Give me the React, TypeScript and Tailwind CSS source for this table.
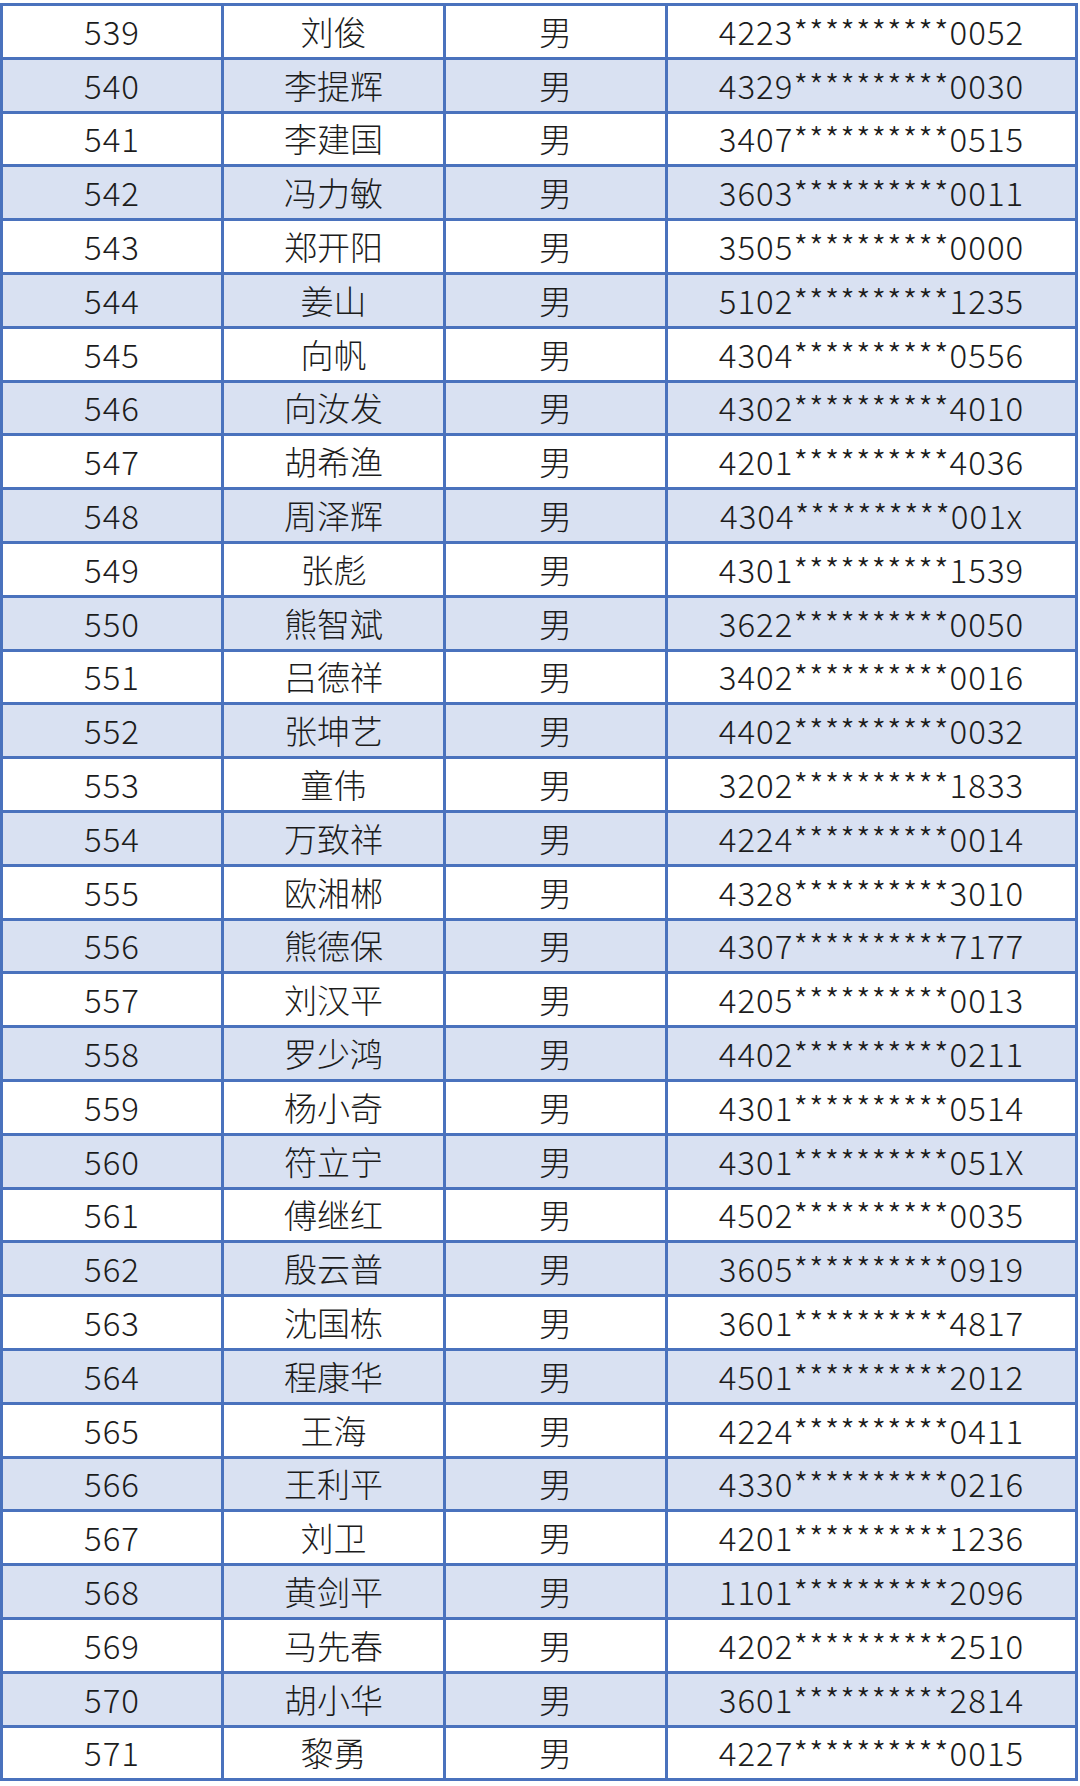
const rows: [number, string, string][] = [
  [539, "刘俊", "4223**********0052"],
  [540, "李提辉", "4329**********0030"],
  [541, "李建国", "3407**********0515"],
  [542, "冯力敏", "3603**********0011"],
  [543, "郑开阳", "3505**********0000"],
  [544, "姜山", "5102**********1235"],
  [545, "向帆", "4304**********0556"],
  [546, "向汝发", "4302**********4010"],
  [547, "胡希渔", "4201**********4036"],
  [548, "周泽辉", "4304**********001x"],
  [549, "张彪", "4301**********1539"],
  [550, "熊智斌", "3622**********0050"],
  [551, "吕德祥", "3402**********0016"],
  [552, "张坤艺", "4402**********0032"],
  [553, "童伟", "3202**********1833"],
  [554, "万致祥", "4224**********0014"],
  [555, "欧湘郴", "4328**********3010"],
  [556, "熊德保", "4307**********7177"],
  [557, "刘汉平", "4205**********0013"],
  [558, "罗少鸿", "4402**********0211"],
  [559, "杨小奇", "4301**********0514"],
  [560, "符立宁", "4301**********051X"],
  [561, "傅继红", "4502**********0035"],
  [562, "殷云普", "3605**********0919"],
  [563, "沈国栋", "3601**********4817"],
  [564, "程康华", "4501**********2012"],
  [565, "王海", "4224**********0411"],
  [566, "王利平", "4330**********0216"],
  [567, "刘卫", "4201**********1236"],
  [568, "黄剑平", "1101**********2096"],
  [569, "马先春", "4202**********2510"],
  [570, "胡小华", "3601**********2814"],
  [571, "黎勇", "4227**********0015"],
];

const cell = "flex items-center justify-center border-r-[3px] border-[#4a72bd]";

export default function App() {
  return (
    <div className="min-h-screen bg-white pt-[3px] font-['Noto_Sans_CJK_SC_Light','Noto_Sans_CJK_SC',sans-serif] text-[33px] font-light leading-none text-[#1c1c1c]">
      <div className="w-[1078px] border-x-[3px] border-b-[3px] border-[#4a72bd]">
        {rows.map(([no, name, id]) => (
          <div
            key={no}
            className={`flex h-[53.8px] border-t-[3px] border-[#4a72bd] ${no % 2 === 0 ? "bg-[#d9e1f2]" : "bg-white"}`}
          >
            <div className={`${cell} w-[221px] tracking-[1px]`}>{no}</div>
            <div className={`${cell} w-[222px]`}>{name}</div>
            <div className={`${cell} w-[222px]`}>男</div>
            <div className="flex flex-1 items-center justify-center tracking-[1px]">{id}</div>
          </div>
        ))}
      </div>
    </div>
  );
}
